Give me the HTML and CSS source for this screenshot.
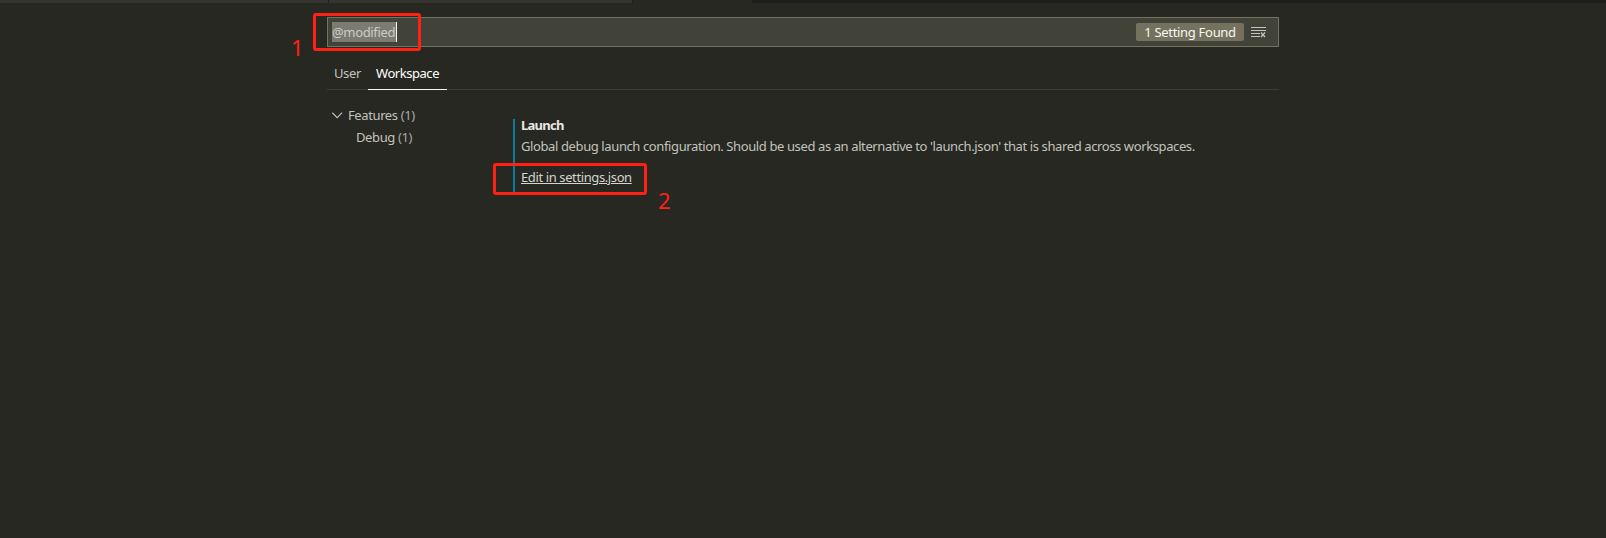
FILE: index.html
```html
<!DOCTYPE html>
<html lang="en">
<head>
<meta charset="utf-8">
<title>Settings</title>
<link rel="stylesheet" href="styles.css">
</head>
<body>
<div class="tabs"><div class="tab first"></div><div class="tab second"></div><div class="tab active"></div></div>
<main class="settings">
  <div class="search">
    <span class="query">@modified</span>
    <span class="badge">1 Setting Found</span>
    <svg class="clear" width="16" height="12" viewBox="0 0 16 12" fill="none" stroke="#c5c5c0"><path d="M0 1.5H15M0 4.5H15M0 7.5H9M0 10.5H9"/><path d="M10 6.5l4 4.5M14 6.5l-4 4.5" stroke-width="1.2"/></svg>
    <div class="mark mark-one"></div><span class="num num-one">1</span>
  </div>
  <nav class="scopes"><span class="scope user"><span>User</span></span><span class="scope workspace"><span>Workspace</span></span></nav>
  <div class="body">
    <aside class="tree">
      <div class="row"><svg class="chevron" width="12" height="8" viewBox="0 0 12 8" fill="none" stroke="#c5c5c0" stroke-width="1.1"><path d="M.3 1.7L5.2 6.6L10.1 1.7"/></svg><span class="features">Features <i>(1)</i></span></div>
      <div class="row child"><span class="debug">Debug <i>(1)</i></span></div>
    </aside>
    <section class="item">
      <h1><span class="title">Launch</span></h1>
      <p><span class="desc">Global debug launch configuration. Should be used as an alternative to 'launch.json' that is shared across workspaces.</span></p>
      <a class="edit"><span class="link">Edit in settings.json</span></a>
      <div class="mark mark-two"></div><span class="num num-two">2</span>
    </section>
  </div>
</main>
</body>
</html>
```
FILE: styles.css
```css
* { box-sizing: border-box; }
body { margin: 0; height: 538px; overflow: hidden; background: #272822; color: #c3c3be; font: 13px/20px "Noto Sans", "Open Sans", sans-serif; letter-spacing: -.39px; }
.tabs { display: flex; height: 3px; background: #1e1f1c; }
.tab { background: #34352f; border-right: 1px solid #1e1f1c; }
.first { width: 329px; }
.second { width: 304px; }
.active { width: 119px; background: #272822; border: 0; }
.settings { width: 952px; margin: 14px 0 0 327px; }
.search { position: relative; display: flex; align-items: center; height: 30px; padding: 0 11px 0 4px; background: #414339; border: 1px solid #75715e; }
.query { width: 65px; height: 20px; line-height: 21px; background: #7b7b72; border-right: 1px solid #f8f8f2; color: #ccccc7; white-space: nowrap; letter-spacing: -.35px; }
.badge { width: 108px; height: 18px; margin-left: auto; border-radius: 2px; background: #75715e; color: #f8f8f2; line-height: 18px; text-align: center; white-space: nowrap; letter-spacing: -.3px; }
.clear { margin: 0 0 0 7px; }
.scopes { display: flex; height: 43px; padding-top: 16px; border-bottom: 1px solid #3c3d38; }
.scope { height: 27px; line-height: 21px; white-space: nowrap; }
.user { width: 41px; padding-left: 7px; }
.workspace { width: 79px; padding-left: 8px; border-bottom: 1px solid #f8f8f2; color: #fff; letter-spacing: -.45px; }
.body { display: flex; }
.tree { width: 186px; padding-top: 14px; }
.row { display: flex; align-items: center; height: 22px; padding-left: 5px; white-space: pre; }
.chevron { width: 12px; margin-right: 4px; }
.child { padding-left: 29px; }
.row i { font-style: normal; color: #aaaaa5; }
.item { position: relative; width: 766px; height: 73px; margin-top: 29px; padding-left: 6px; border-left: 2px solid #0c7d9d; white-space: nowrap; }
.item h1 { height: 17px; margin: 0; line-height: 13px; font-size: 13px; color: #e7e7e2; letter-spacing: -.75px; }
.item p { height: 31px; margin: 0; line-height: 20px; }
.edit { display: block; height: 20px; color: #d5d5d0; }
.link { text-decoration: underline; text-underline-offset: 1px; }
.mark { position: absolute; border: 3px solid #ff2116; border-radius: 3px; }
.mark-one { left: -15px; top: -5px; width: 108px; height: 38px; }
.mark-two { left: -22px; top: 44px; width: 154px; height: 32px; }
.num { position: absolute; color: #ff2116; font: 22px/22px "Noto Sans", sans-serif; }
.num-one { left: -37px; top: 18px; }
.num-two { left: 143px; top: 70px; }
```
